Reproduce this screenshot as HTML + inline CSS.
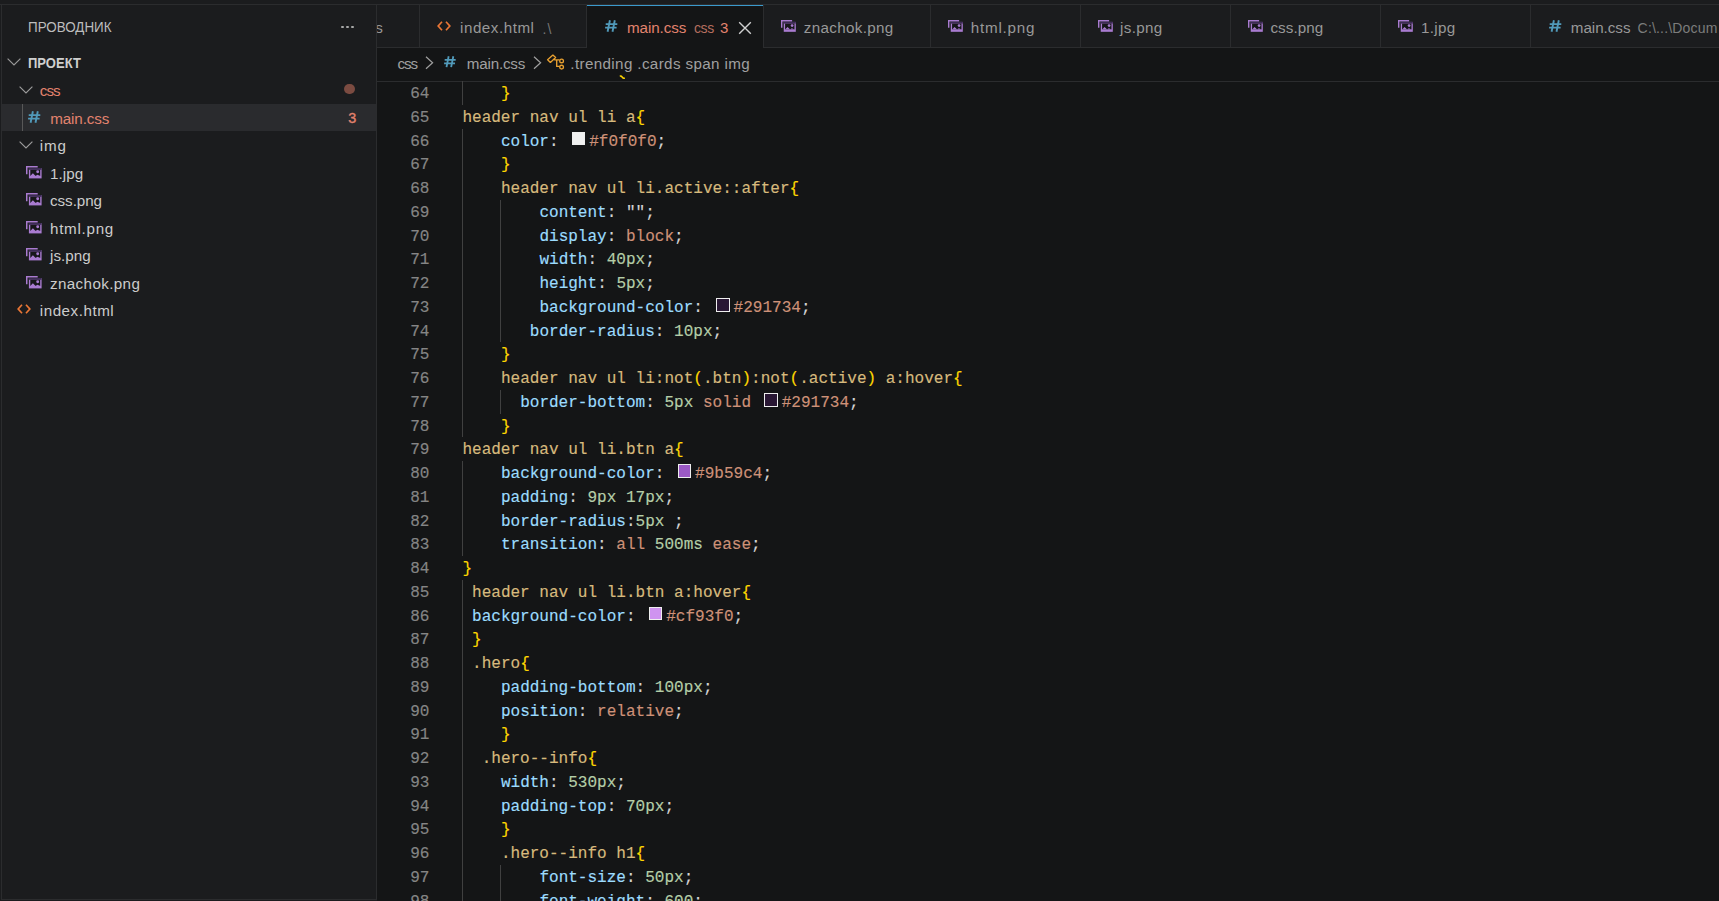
<!DOCTYPE html>
<html><head><meta charset="utf-8">
<style>
*{margin:0;padding:0;box-sizing:border-box}
html,body{width:1719px;height:901px;overflow:hidden;background:#1b1c1e;font-family:"Liberation Sans",sans-serif;position:relative}
.abs{position:absolute}
.hl{position:absolute;height:1px;background:#2b2c2e}
.vl{position:absolute;width:1px;background:#2b2c2e}
.t{position:absolute;white-space:pre;line-height:20px;height:20px}
.code{position:absolute;white-space:pre;font-family:"Liberation Mono",monospace;font-size:16.04px;line-height:23.75px;height:23.75px;color:#d4d4d4;-webkit-text-stroke:0.15px currentColor}
.ln{position:absolute;left:369.5px;width:60px;text-align:right;font-family:"Liberation Mono",monospace;font-size:16.04px;line-height:23.75px;color:#858585;-webkit-text-stroke:0.15px currentColor}
.s{color:#d7ba7d}.p{color:#9cdcfe}.n{color:#b5cea8}.v{color:#ce9178}.b{color:#ffd700}.w{color:#d4d4d4}
.sw{display:inline-block;width:13.6px;height:13.4px;border:1.6px solid #eeeeee;margin:0 3.9px 0 3.5px;vertical-align:0.2px}
.guide{position:absolute;width:1px;background:#404040}
</style></head><body>
<div class="abs" style="left:377px;top:81px;width:1342px;height:820px;background:#141516"></div>
<div class="abs" style="left:377px;top:48px;width:1342px;height:33px;background:#141516"></div>
<div class="hl" style="left:377px;top:81px;width:1342px"></div>
<div class="ln" style="top:83.00px">64</div><div class="code" style="top:83.00px;left:500.900px"><span class="b">}</span></div><div class="ln" style="top:106.75px">65</div><div class="code" style="top:106.75px;left:462.400px"><span class="s">header nav ul li a</span><span class="b">{</span></div><div class="ln" style="top:130.50px">66</div><div class="code" style="top:130.50px;left:500.900px"><span class="p">color</span><span class="w">: </span><span class="sw" style="background:#f0f0f0"></span><span class="v">#f0f0f0</span><span class="w">;</span></div><div class="ln" style="top:154.25px">67</div><div class="code" style="top:154.25px;left:500.900px"><span class="b">}</span></div><div class="ln" style="top:178.00px">68</div><div class="code" style="top:178.00px;left:500.900px"><span class="s">header nav ul li.active::after</span><span class="b">{</span></div><div class="ln" style="top:201.75px">69</div><div class="code" style="top:201.75px;left:539.400px"><span class="p">content</span><span class="w">: </span><span class="w">&quot;&quot;</span><span class="w">;</span></div><div class="ln" style="top:225.50px">70</div><div class="code" style="top:225.50px;left:539.400px"><span class="p">display</span><span class="w">: </span><span class="v">block</span><span class="w">;</span></div><div class="ln" style="top:249.25px">71</div><div class="code" style="top:249.25px;left:539.400px"><span class="p">width</span><span class="w">: </span><span class="n">40px</span><span class="w">;</span></div><div class="ln" style="top:273.00px">72</div><div class="code" style="top:273.00px;left:539.400px"><span class="p">height</span><span class="w">: </span><span class="n">5px</span><span class="w">;</span></div><div class="ln" style="top:296.75px">73</div><div class="code" style="top:296.75px;left:539.400px"><span class="p">background-color</span><span class="w">: </span><span class="sw" style="background:#291734"></span><span class="v">#291734</span><span class="w">;</span></div><div class="ln" style="top:320.50px">74</div><div class="code" style="top:320.50px;left:529.775px"><span class="p">border-radius</span><span class="w">: </span><span class="n">10px</span><span class="w">;</span></div><div class="ln" style="top:344.25px">75</div><div class="code" style="top:344.25px;left:500.900px"><span class="b">}</span></div><div class="ln" style="top:368.00px">76</div><div class="code" style="top:368.00px;left:500.900px"><span class="s">header nav ul li:not</span><span class="b">(</span><span class="s">.btn</span><span class="b">)</span><span class="s">:not</span><span class="b">(</span><span class="s">.active</span><span class="b">)</span><span class="s"> a:hover</span><span class="b">{</span></div><div class="ln" style="top:391.75px">77</div><div class="code" style="top:391.75px;left:520.150px"><span class="p">border-bottom</span><span class="w">: </span><span class="n">5px</span><span class="w"> </span><span class="v">solid</span><span class="w"> </span><span class="sw" style="background:#291734"></span><span class="v">#291734</span><span class="w">;</span></div><div class="ln" style="top:415.50px">78</div><div class="code" style="top:415.50px;left:500.900px"><span class="b">}</span></div><div class="ln" style="top:439.25px">79</div><div class="code" style="top:439.25px;left:462.400px"><span class="s">header nav ul li.btn a</span><span class="b">{</span></div><div class="ln" style="top:463.00px">80</div><div class="code" style="top:463.00px;left:500.900px"><span class="p">background-color</span><span class="w">: </span><span class="sw" style="background:#9b59c4"></span><span class="v">#9b59c4</span><span class="w">;</span></div><div class="ln" style="top:486.75px">81</div><div class="code" style="top:486.75px;left:500.900px"><span class="p">padding</span><span class="w">: </span><span class="n">9px</span><span class="w"> </span><span class="n">17px</span><span class="w">;</span></div><div class="ln" style="top:510.50px">82</div><div class="code" style="top:510.50px;left:500.900px"><span class="p">border-radius</span><span class="w">:</span><span class="n">5px</span><span class="w"> ;</span></div><div class="ln" style="top:534.25px">83</div><div class="code" style="top:534.25px;left:500.900px"><span class="p">transition</span><span class="w">: </span><span class="v">all</span><span class="w"> </span><span class="n">500ms</span><span class="w"> </span><span class="v">ease</span><span class="w">;</span></div><div class="ln" style="top:558.00px">84</div><div class="code" style="top:558.00px;left:462.400px"><span class="b">}</span></div><div class="ln" style="top:581.75px">85</div><div class="code" style="top:581.75px;left:472.025px"><span class="s">header nav ul li.btn a:hover</span><span class="b">{</span></div><div class="ln" style="top:605.50px">86</div><div class="code" style="top:605.50px;left:472.025px"><span class="p">background-color</span><span class="w">: </span><span class="sw" style="background:#cf93f0"></span><span class="v">#cf93f0</span><span class="w">;</span></div><div class="ln" style="top:629.25px">87</div><div class="code" style="top:629.25px;left:472.025px"><span class="b">}</span></div><div class="ln" style="top:653.00px">88</div><div class="code" style="top:653.00px;left:472.025px"><span class="s">.hero</span><span class="b">{</span></div><div class="ln" style="top:676.75px">89</div><div class="code" style="top:676.75px;left:500.900px"><span class="p">padding-bottom</span><span class="w">: </span><span class="n">100px</span><span class="w">;</span></div><div class="ln" style="top:700.50px">90</div><div class="code" style="top:700.50px;left:500.900px"><span class="p">position</span><span class="w">: </span><span class="v">relative</span><span class="w">;</span></div><div class="ln" style="top:724.25px">91</div><div class="code" style="top:724.25px;left:500.900px"><span class="b">}</span></div><div class="ln" style="top:748.00px">92</div><div class="code" style="top:748.00px;left:481.650px"><span class="s">.hero--info</span><span class="b">{</span></div><div class="ln" style="top:771.75px">93</div><div class="code" style="top:771.75px;left:500.900px"><span class="p">width</span><span class="w">: </span><span class="n">530px</span><span class="w">;</span></div><div class="ln" style="top:795.50px">94</div><div class="code" style="top:795.50px;left:500.900px"><span class="p">padding-top</span><span class="w">: </span><span class="n">70px</span><span class="w">;</span></div><div class="ln" style="top:819.25px">95</div><div class="code" style="top:819.25px;left:500.900px"><span class="b">}</span></div><div class="ln" style="top:843.00px">96</div><div class="code" style="top:843.00px;left:500.900px"><span class="s">.hero--info h1</span><span class="b">{</span></div><div class="ln" style="top:866.75px">97</div><div class="code" style="top:866.75px;left:539.400px"><span class="p">font-size</span><span class="w">: </span><span class="n">50px</span><span class="w">;</span></div><div class="ln" style="top:890.50px">98</div><div class="code" style="top:890.50px;left:539.400px"><span class="p">font-weight</span><span class="w">: </span><span class="n">600</span><span class="w">;</span></div><div class="guide" style="left:462px;top:81.00px;height:23.75px"></div><div class="guide" style="left:462px;top:128.50px;height:308.75px"></div><div class="guide" style="left:462px;top:461.00px;height:95.00px"></div><div class="guide" style="left:462px;top:579.75px;height:332.50px"></div><div class="guide" style="left:500px;top:199.75px;height:142.50px"></div><div class="guide" style="left:500px;top:389.75px;height:23.75px"></div><div class="guide" style="left:500px;top:864.75px;height:47.50px"></div>
<div class="abs" style="left:377px;top:48px;width:1342px;height:33px;background:#141516"></div><svg width="8" height="5" style="position:absolute;left:619px;top:75px"><path d="M0.8 1.2 Q2.3 0.8 3.3 2.2 T5.8 3.0" stroke="#ffd700" stroke-width="1.5" fill="none"/></svg>
<div class="t" style="left:397.6px;top:53.53px;font-size:15.2px;color:#a0a0a0;font-weight:400;letter-spacing:-1.15px">css</div><svg width="9" height="14" viewBox="0 0 9 14" style="position:absolute;left:425px;top:55.5px"><path d="M1 0.8 L7.6 6.8 L1 12.8" stroke="#a0a0a0" stroke-width="1.2" fill="none"/></svg><div style="position:absolute;left:444.3px;top:56.2px;width:13px;height:12px"><div style="transform:scale(0.95,0.96);transform-origin:0 0;position:relative"><svg width="13" height="12" viewBox="0 0 13 12" style="position:absolute;left:0px;top:0px"><path d="M4.9 0.3 L2.6 11.7 M9.8 0.3 L7.5 11.7 M0.7 4.1 H12.3 M0.1 7.6 H11.6" stroke="#519aba" stroke-width="1.9" fill="none"/></svg></div></div><div class="t" style="left:466.8px;top:53.53px;font-size:15.2px;color:#a0a0a0;font-weight:400;letter-spacing:-0.2px">main.css</div><svg width="9" height="14" viewBox="0 0 9 14" style="position:absolute;left:532.5px;top:55.5px"><path d="M1 0.8 L7.6 6.8 L1 12.8" stroke="#a0a0a0" stroke-width="1.2" fill="none"/></svg><svg width="20" height="16" viewBox="0 0 20 16" style="position:absolute;left:546px;top:54px"><path d="M6.9 1.1 L9.6 3.6 L4.4 8.4 L1.6 5.8 Z M8.2 5.9 H13.6 M10.7 5.9 V12.4 H13.6" stroke="#e8a030" stroke-width="1.35" fill="none" stroke-linejoin="round"/><circle cx="15.6" cy="6.9" r="1.85" stroke="#e8a030" stroke-width="1.35" fill="none"/><circle cx="15.6" cy="13.1" r="1.85" stroke="#e8a030" stroke-width="1.35" fill="none"/></svg><div class="t" style="left:570.3px;top:53.53px;font-size:15.2px;color:#a0a0a0;font-weight:400;letter-spacing:0.37px">.trending .cards span img</div>
<div class="abs" style="left:0;top:0;width:1719px;height:48px;background:#1b1c1e"></div>
<div class="hl" style="left:0;top:4px;width:1719px"></div>
<div class="hl" style="left:377px;top:47px;width:1342px"></div>
<div class="vl" style="left:419px;top:5px;height:42px"></div><div class="vl" style="left:586px;top:5px;height:43px"></div><div class="vl" style="left:763px;top:5px;height:43px"></div><div class="vl" style="left:930px;top:5px;height:42px"></div><div class="vl" style="left:1080px;top:5px;height:42px"></div><div class="vl" style="left:1230px;top:5px;height:42px"></div><div class="vl" style="left:1380px;top:5px;height:42px"></div><div class="vl" style="left:1530px;top:5px;height:42px"></div><div class="abs" style="left:587px;top:5px;width:176px;height:43px;background:#141516"></div><div class="abs" style="left:587px;top:5px;width:176px;height:1px;background:#3b99cc"></div><div class="t" style="left:375.2px;top:17.73px;font-size:15.2px;color:#989898;font-weight:400;">s</div><svg width="14" height="11" viewBox="0 0 14 11" style="position:absolute;left:437px;top:21px"><path d="M5 0.8 L1.2 5 L5 9.2 M9 0.8 L12.8 5 L9 9.2" stroke="#ea7635" stroke-width="1.7" fill="none"/></svg><div class="t" style="left:460px;top:17.73px;font-size:15.2px;color:#989898;font-weight:400;letter-spacing:0.53px">index.html</div><div class="t" style="left:542.6px;top:18.75px;font-size:14px;color:#767676;font-weight:400;letter-spacing:1px">.\</div><svg width="13" height="12" viewBox="0 0 13 12" style="position:absolute;left:604.6px;top:20px"><path d="M4.9 0.3 L2.6 11.7 M9.8 0.3 L7.5 11.7 M0.7 4.1 H12.3 M0.1 7.6 H11.6" stroke="#519aba" stroke-width="1.9" fill="none"/></svg><div class="t" style="left:627px;top:17.73px;font-size:15.2px;color:#e2836e;font-weight:400;letter-spacing:-0.09px">main.css</div><div class="t" style="left:694px;top:18.15px;font-size:14px;color:#b56e5f;font-weight:400;letter-spacing:-0.4px">css</div><div class="t" style="left:720px;top:17.80px;font-size:15px;color:#e2836e;font-weight:400;">3</div><svg width="14" height="14" viewBox="0 0 14 14" style="position:absolute;left:738px;top:20.5px"><path d="M1.2 1.2 L12.8 12.8 M12.8 1.2 L1.2 12.8" stroke="#d0d0d0" stroke-width="1.4"/></svg><svg width="15.2" height="12.4" viewBox="0 0 16 13" preserveAspectRatio="none" style="position:absolute;left:780.7px;top:19.9px"><path d="M0.75 8.2 V0.75 H11.7" fill="none" stroke="#a97bd0" stroke-width="1.5"/><rect x="2.9" y="2" width="12.7" height="10.4" fill="#a97bd0"/><rect x="2.9" y="2" width="12.7" height="1.8" fill="#3d2b55"/><rect x="4.3" y="3.8" width="9.9" height="6.1" fill="#17171a"/><path d="M4.3 9.9 L6.9 7.3 L9.6 10 L11.4 8.7 L14.2 9.9 Z" fill="#a97bd0"/><circle cx="11.7" cy="5.8" r="1.45" fill="#a97bd0"/></svg><div class="t" style="left:803.7px;top:17.73px;font-size:15.2px;color:#989898;font-weight:400;letter-spacing:0.35px">znachok.png</div><svg width="15.2" height="12.4" viewBox="0 0 16 13" preserveAspectRatio="none" style="position:absolute;left:947.7px;top:19.9px"><path d="M0.75 8.2 V0.75 H11.7" fill="none" stroke="#a97bd0" stroke-width="1.5"/><rect x="2.9" y="2" width="12.7" height="10.4" fill="#a97bd0"/><rect x="2.9" y="2" width="12.7" height="1.8" fill="#3d2b55"/><rect x="4.3" y="3.8" width="9.9" height="6.1" fill="#17171a"/><path d="M4.3 9.9 L6.9 7.3 L9.6 10 L11.4 8.7 L14.2 9.9 Z" fill="#a97bd0"/><circle cx="11.7" cy="5.8" r="1.45" fill="#a97bd0"/></svg><div class="t" style="left:970.8px;top:17.73px;font-size:15.2px;color:#989898;font-weight:400;letter-spacing:0.78px">html.png</div><svg width="15.2" height="12.4" viewBox="0 0 16 13" preserveAspectRatio="none" style="position:absolute;left:1097.7px;top:19.9px"><path d="M0.75 8.2 V0.75 H11.7" fill="none" stroke="#a97bd0" stroke-width="1.5"/><rect x="2.9" y="2" width="12.7" height="10.4" fill="#a97bd0"/><rect x="2.9" y="2" width="12.7" height="1.8" fill="#3d2b55"/><rect x="4.3" y="3.8" width="9.9" height="6.1" fill="#17171a"/><path d="M4.3 9.9 L6.9 7.3 L9.6 10 L11.4 8.7 L14.2 9.9 Z" fill="#a97bd0"/><circle cx="11.7" cy="5.8" r="1.45" fill="#a97bd0"/></svg><div class="t" style="left:1120px;top:17.73px;font-size:15.2px;color:#989898;font-weight:400;letter-spacing:0.34px">js.png</div><svg width="15.2" height="12.4" viewBox="0 0 16 13" preserveAspectRatio="none" style="position:absolute;left:1247.7px;top:19.9px"><path d="M0.75 8.2 V0.75 H11.7" fill="none" stroke="#a97bd0" stroke-width="1.5"/><rect x="2.9" y="2" width="12.7" height="10.4" fill="#a97bd0"/><rect x="2.9" y="2" width="12.7" height="1.8" fill="#3d2b55"/><rect x="4.3" y="3.8" width="9.9" height="6.1" fill="#17171a"/><path d="M4.3 9.9 L6.9 7.3 L9.6 10 L11.4 8.7 L14.2 9.9 Z" fill="#a97bd0"/><circle cx="11.7" cy="5.8" r="1.45" fill="#a97bd0"/></svg><div class="t" style="left:1270.4px;top:17.73px;font-size:15.2px;color:#989898;font-weight:400;letter-spacing:0.07px">css.png</div><svg width="15.2" height="12.4" viewBox="0 0 16 13" preserveAspectRatio="none" style="position:absolute;left:1397.7px;top:19.9px"><path d="M0.75 8.2 V0.75 H11.7" fill="none" stroke="#a97bd0" stroke-width="1.5"/><rect x="2.9" y="2" width="12.7" height="10.4" fill="#a97bd0"/><rect x="2.9" y="2" width="12.7" height="1.8" fill="#3d2b55"/><rect x="4.3" y="3.8" width="9.9" height="6.1" fill="#17171a"/><path d="M4.3 9.9 L6.9 7.3 L9.6 10 L11.4 8.7 L14.2 9.9 Z" fill="#a97bd0"/><circle cx="11.7" cy="5.8" r="1.45" fill="#a97bd0"/></svg><div class="t" style="left:1421px;top:17.73px;font-size:15.2px;color:#989898;font-weight:400;letter-spacing:0.32px">1.jpg</div><svg width="13" height="12" viewBox="0 0 13 12" style="position:absolute;left:1548.6px;top:20px"><path d="M4.9 0.3 L2.6 11.7 M9.8 0.3 L7.5 11.7 M0.7 4.1 H12.3 M0.1 7.6 H11.6" stroke="#519aba" stroke-width="1.9" fill="none"/></svg><div class="t" style="left:1570.8px;top:17.73px;font-size:15.2px;color:#989898;font-weight:400;letter-spacing:-0.03px">main.css</div><div class="t" style="left:1637.6px;top:18.15px;font-size:14px;color:#7c7c7c;font-weight:400;letter-spacing:0.18px">C:\...\Docum</div>
<div class="abs" style="left:0;top:4px;width:377px;height:897px;background:#1b1c1e"></div>
<div class="vl" style="left:1px;top:4px;height:896px"></div>
<div class="vl" style="left:376px;top:4px;height:896px"></div>
<div class="hl" style="left:1px;top:899px;width:376px"></div>
<div class="hl" style="left:0;top:4px;width:377px"></div>
<div class="t" style="left:27.6px;top:17.35px;font-size:14px;color:#bdbdbd;font-weight:400;transform:scaleX(0.957);transform-origin:0 0">ПРОВОДНИК</div><div class="abs" style="left:340.8px;top:25.6px;width:3px;height:2.6px;border-radius:1px;background:#a8a8a8"></div><div class="abs" style="left:345.8px;top:25.6px;width:3px;height:2.6px;border-radius:1px;background:#a8a8a8"></div><div class="abs" style="left:350.8px;top:25.6px;width:3px;height:2.6px;border-radius:1px;background:#a8a8a8"></div><svg width="14" height="8" viewBox="0 0 14 8" style="position:absolute;left:7.4px;top:57.6px"><path d="M0.6 0.6 L7 7 L13.4 0.6" stroke="#999999" stroke-width="1.15" fill="none"/></svg><div class="t" style="left:27.6px;top:53.45px;font-size:14px;color:#cfcfcf;font-weight:700;transform:scaleX(0.93);transform-origin:0 0">ПРОЕКТ</div><div class="abs" style="left:2px;top:104px;width:374px;height:27px;background:#2a2b2e"></div><div class="abs" style="left:22px;top:104px;width:1px;height:27px;background:#585858"></div><svg width="14" height="8" viewBox="0 0 14 8" style="position:absolute;left:18.6px;top:85.6px"><path d="M0.6 0.6 L7 7 L13.4 0.6" stroke="#9c9c9c" stroke-width="1.15" fill="none"/></svg><div class="t" style="left:39.8px;top:81.43px;font-size:15.2px;color:#e2836e;font-weight:400;letter-spacing:-0.95px">css</div><div class="abs" style="left:344.4px;top:84.1px;width:10.2px;height:10.2px;border-radius:5.1px;background:#7b4b41"></div><svg width="13" height="12" viewBox="0 0 13 12" style="position:absolute;left:27.6px;top:110.8px"><path d="M4.9 0.3 L2.6 11.7 M9.8 0.3 L7.5 11.7 M0.7 4.1 H12.3 M0.1 7.6 H11.6" stroke="#519aba" stroke-width="1.9" fill="none"/></svg><div class="t" style="left:50.2px;top:108.93px;font-size:15.2px;color:#e2836e;font-weight:400;letter-spacing:-0.1px">main.css</div><div class="t" style="left:348.2px;top:108.21px;font-size:14.4px;color:#e2826d;font-weight:400;-webkit-text-stroke:0.35px #e2826d">3</div><svg width="14" height="8" viewBox="0 0 14 8" style="position:absolute;left:18.8px;top:141.4px"><path d="M0.6 0.6 L7 7 L13.4 0.6" stroke="#9c9c9c" stroke-width="1.15" fill="none"/></svg><div class="t" style="left:39.8px;top:136.43px;font-size:15.2px;color:#cccccc;font-weight:400;letter-spacing:0.8px">img</div><svg width="16" height="13" viewBox="0 0 16 13" preserveAspectRatio="none" style="position:absolute;left:26.2px;top:165.6px"><path d="M0.75 8.2 V0.75 H11.7" fill="none" stroke="#a97bd0" stroke-width="1.5"/><rect x="2.9" y="2" width="12.7" height="10.4" fill="#a97bd0"/><rect x="2.9" y="2" width="12.7" height="1.8" fill="#3d2b55"/><rect x="4.3" y="3.8" width="9.9" height="6.1" fill="#17171a"/><path d="M4.3 9.9 L6.9 7.3 L9.6 10 L11.4 8.7 L14.2 9.9 Z" fill="#a97bd0"/><circle cx="11.7" cy="5.8" r="1.45" fill="#a97bd0"/></svg><div class="t" style="left:50px;top:163.93px;font-size:15.2px;color:#cccccc;font-weight:400;letter-spacing:0.07px">1.jpg</div><svg width="16" height="13" viewBox="0 0 16 13" preserveAspectRatio="none" style="position:absolute;left:26.2px;top:193.1px"><path d="M0.75 8.2 V0.75 H11.7" fill="none" stroke="#a97bd0" stroke-width="1.5"/><rect x="2.9" y="2" width="12.7" height="10.4" fill="#a97bd0"/><rect x="2.9" y="2" width="12.7" height="1.8" fill="#3d2b55"/><rect x="4.3" y="3.8" width="9.9" height="6.1" fill="#17171a"/><path d="M4.3 9.9 L6.9 7.3 L9.6 10 L11.4 8.7 L14.2 9.9 Z" fill="#a97bd0"/><circle cx="11.7" cy="5.8" r="1.45" fill="#a97bd0"/></svg><div class="t" style="left:50px;top:191.43px;font-size:15.2px;color:#cccccc;font-weight:400;letter-spacing:-0.05px">css.png</div><svg width="16" height="13" viewBox="0 0 16 13" preserveAspectRatio="none" style="position:absolute;left:26.2px;top:220.6px"><path d="M0.75 8.2 V0.75 H11.7" fill="none" stroke="#a97bd0" stroke-width="1.5"/><rect x="2.9" y="2" width="12.7" height="10.4" fill="#a97bd0"/><rect x="2.9" y="2" width="12.7" height="1.8" fill="#3d2b55"/><rect x="4.3" y="3.8" width="9.9" height="6.1" fill="#17171a"/><path d="M4.3 9.9 L6.9 7.3 L9.6 10 L11.4 8.7 L14.2 9.9 Z" fill="#a97bd0"/><circle cx="11.7" cy="5.8" r="1.45" fill="#a97bd0"/></svg><div class="t" style="left:50px;top:218.93px;font-size:15.2px;color:#cccccc;font-weight:400;letter-spacing:0.72px">html.png</div><svg width="16" height="13" viewBox="0 0 16 13" preserveAspectRatio="none" style="position:absolute;left:26.2px;top:248.1px"><path d="M0.75 8.2 V0.75 H11.7" fill="none" stroke="#a97bd0" stroke-width="1.5"/><rect x="2.9" y="2" width="12.7" height="10.4" fill="#a97bd0"/><rect x="2.9" y="2" width="12.7" height="1.8" fill="#3d2b55"/><rect x="4.3" y="3.8" width="9.9" height="6.1" fill="#17171a"/><path d="M4.3 9.9 L6.9 7.3 L9.6 10 L11.4 8.7 L14.2 9.9 Z" fill="#a97bd0"/><circle cx="11.7" cy="5.8" r="1.45" fill="#a97bd0"/></svg><div class="t" style="left:50px;top:246.43px;font-size:15.2px;color:#cccccc;font-weight:400;letter-spacing:0.02px">js.png</div><svg width="16" height="13" viewBox="0 0 16 13" preserveAspectRatio="none" style="position:absolute;left:26.2px;top:275.6px"><path d="M0.75 8.2 V0.75 H11.7" fill="none" stroke="#a97bd0" stroke-width="1.5"/><rect x="2.9" y="2" width="12.7" height="10.4" fill="#a97bd0"/><rect x="2.9" y="2" width="12.7" height="1.8" fill="#3d2b55"/><rect x="4.3" y="3.8" width="9.9" height="6.1" fill="#17171a"/><path d="M4.3 9.9 L6.9 7.3 L9.6 10 L11.4 8.7 L14.2 9.9 Z" fill="#a97bd0"/><circle cx="11.7" cy="5.8" r="1.45" fill="#a97bd0"/></svg><div class="t" style="left:50px;top:273.93px;font-size:15.2px;color:#cccccc;font-weight:400;letter-spacing:0.37px">znachok.png</div><svg width="14" height="11" viewBox="0 0 14 11" style="position:absolute;left:17.2px;top:303.6px"><path d="M5 0.8 L1.2 5 L5 9.2 M9 0.8 L12.8 5 L9 9.2" stroke="#ea7635" stroke-width="1.7" fill="none"/></svg><div class="t" style="left:39.8px;top:301.43px;font-size:15.2px;color:#cccccc;font-weight:400;letter-spacing:0.52px">index.html</div>
</body></html>
